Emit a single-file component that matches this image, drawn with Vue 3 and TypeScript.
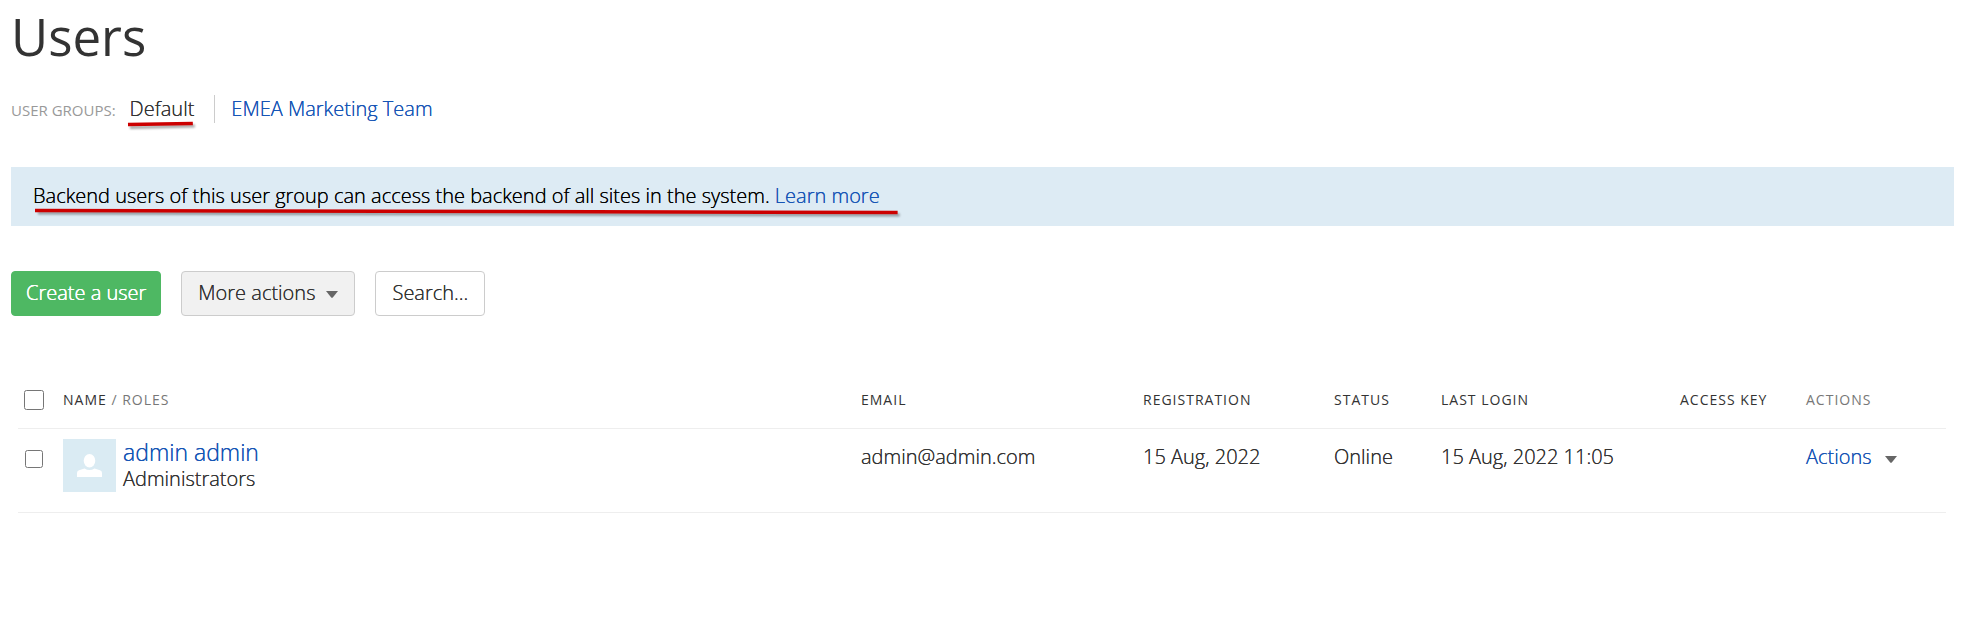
<script setup lang="ts">
import { ref, computed } from 'vue'

interface Group { id: string; name: string }
interface User {
  id: number
  name: string
  roles: string
  email: string
  registered: string
  status: string
  lastLogin: string
  accessKey: string
}

const groups: Group[] = [
  { id: 'default', name: 'Default' },
  { id: 'emea', name: 'EMEA Marketing Team' },
]
const currentGroup = ref('default')

const users: User[] = [
  {
    id: 1,
    name: 'admin admin',
    roles: 'Administrators',
    email: 'admin@admin.com',
    registered: '15 Aug, 2022',
    status: 'Online',
    lastLogin: '15 Aug, 2022 11:05',
    accessKey: '',
  },
]
const selected = ref<number[]>([])
const allSelected = computed({
  get: () => selected.value.length === users.length,
  set: (on: boolean) => { selected.value = on ? users.map((u) => u.id) : [] },
})
</script>

<template>
  <main class="page">
    <h1 class="title">Users</h1>

    <nav class="groups" aria-label="User groups">
      <span class="groups-label">USER GROUPS:</span>
      <ul class="groups-list">
        <li v-for="g in groups" :key="g.id" class="group">
          <span v-if="g.id === currentGroup" class="group-current">
            {{ g.name }}
            <svg class="mark mark-group" viewBox="0 0 74 10" preserveAspectRatio="none" aria-hidden="true">
              <path class="mark-shade" d="M3 6.5 L69 5" />
              <path class="mark-line" d="M1 3.5 L67 2.5" />
            </svg>
          </span>
          <a v-else href="#" @click.prevent="currentGroup = g.id">{{ g.name }}</a>
        </li>
      </ul>
    </nav>

    <p class="info">
      <span class="info-text">
        Backend users of this user group can access the backend of all sites in the system.
        <a href="#">Learn more</a>
        <svg class="mark mark-info" viewBox="0 0 870 10" preserveAspectRatio="none" aria-hidden="true">
          <path class="mark-shade" d="M4 5 L867 7" />
          <path class="mark-line" d="M1 2.5 L865 4.5" />
        </svg>
      </span>
    </p>

    <div class="toolbar">
      <button type="button" class="btn btn-create">Create a user</button>
      <button type="button" class="btn btn-more">
        More actions
        <svg class="caret" viewBox="0 0 12 7" aria-hidden="true"><path d="M0 0H12L6.8 6.4Q6 7 5.2 6.4Z" /></svg>
      </button>
      <button type="button" class="btn btn-search">Search...</button>
    </div>

    <div class="grid-wrap">
      <table class="grid">
        <colgroup>
          <col class="c-check"><col class="c-name"><col class="c-email"><col class="c-reg">
          <col class="c-status"><col class="c-login"><col class="c-key"><col class="c-actions">
        </colgroup>
        <thead>
          <tr>
            <th scope="col"><input v-model="allSelected" type="checkbox" class="check check-all" aria-label="Select all users"></th>
            <th scope="col">NAME <span class="muted">/ ROLES</span></th>
            <th scope="col">EMAIL</th>
            <th scope="col">REGISTRATION</th>
            <th scope="col">STATUS</th>
            <th scope="col">LAST LOGIN</th>
            <th scope="col">ACCESS KEY</th>
            <th scope="col" class="muted">ACTIONS</th>
          </tr>
        </thead>
        <tbody>
          <tr v-for="u in users" :key="u.id">
            <td><input v-model="selected" type="checkbox" class="check" :value="u.id" :aria-label="`Select ${u.name}`"></td>
            <td class="user-cell">
              <div class="user">
                <svg class="avatar" viewBox="0 0 53 53" aria-hidden="true">
                  <rect width="53" height="53" fill="#daebf3" />
                  <ellipse cx="26.5" cy="21.7" rx="5.8" ry="6.8" fill="#fff" />
                  <path d="M14 38V34Q14 32 16 31.3L21.5 29.6Q26.5 32.6 31.5 29.6L37 31.3Q39 32 39 34V38Z" fill="#fff" />
                </svg>
                <div>
                  <a href="#" class="user-name">{{ u.name }}</a>
                  <div class="user-roles">{{ u.roles }}</div>
                </div>
              </div>
            </td>
            <td>{{ u.email }}</td>
            <td>{{ u.registered }}</td>
            <td>{{ u.status }}</td>
            <td>{{ u.lastLogin }}</td>
            <td>{{ u.accessKey }}</td>
            <td>
              <button type="button" class="row-actions">
                Actions
                <svg class="caret" viewBox="0 0 12 7" aria-hidden="true"><path d="M0 0H12L6.8 6.4Q6 7 5.2 6.4Z" /></svg>
              </button>
            </td>
          </tr>
        </tbody>
      </table>
    </div>
  </main>
</template>

<style>
body {
  background: #fff;
}
</style>

<style scoped>
.page {
  padding: 0 16px 0 11px;
  font-family: "Open Sans", "Noto Sans", sans-serif;
  font-size: 20px;
  font-weight: 300;
  line-height: 28px;
  color: #333;
  text-shadow: 0 0 0 currentColor;
}
a {
  color: #1655b5;
  text-decoration: none;
  text-shadow: 0 0 0 currentColor;
}
.title {
  margin: 0;
  font-size: 51px;
  line-height: 72px;
  font-weight: 400;
  text-shadow: none;
}
.groups {
  display: flex;
  align-items: baseline;
  gap: 14px;
  margin-top: 23px;
}
.groups-label {
  font-size: 15px;
  font-weight: 400;
  color: #999;
  text-shadow: none;
}
.groups-list {
  display: flex;
  margin: 0;
  padding: 0;
  list-style: none;
}
.group + .group {
  margin-left: 20px;
  padding-left: 16px;
  border-left: 1px solid #ccc;
}
.group-current,
.info-text {
  position: relative;
}
.mark {
  position: absolute;
  overflow: visible;
  pointer-events: none;
}
.mark-group {
  left: -3px;
  top: 26px;
  width: calc(100% + 8px);
  height: 10px;
}
.mark-info {
  left: 1px;
  top: 26px;
  width: calc(100% + 22px);
  height: 10px;
}
.mark-line {
  fill: none;
  stroke: #c00;
  stroke-width: 3.5;
}
.mark-shade {
  fill: none;
  stroke: #000;
  stroke-opacity: 0.35;
  stroke-width: 3;
  filter: blur(1px);
}
.info {
  display: flex;
  margin: 43px 0 0;
  padding: 15px 22px 16px;
  background: #ddebf4;
  color: #000;
  text-shadow: 0 0 0 currentColor;
}
.toolbar {
  display: flex;
  gap: 20px;
  margin-top: 45px;
}
.btn {
  display: flex;
  align-items: center;
  height: 45px;
  padding: 0 16px 2px;
  border: 1px solid #ccc;
  border-radius: 4px;
  background: #fff;
  color: #333;
  font: inherit;
  text-shadow: 0 0 0 currentColor;
}
.btn-create {
  padding: 0 14px 2px;
  border-color: #4eb863;
  background: #4eb863;
  color: #fff;
  text-shadow: 0 0 0 currentColor, 0 0 0 currentColor;
}
.btn-more {
  gap: 11px;
  background: #f1f1f1;
}
.caret {
  width: 12px;
  height: 7px;
  margin-top: 4px;
  fill: #666;
}
.grid-wrap {
  margin: 58px 8px 0 7px;
}
.grid {
  width: 100%;
  table-layout: fixed;
  border-collapse: collapse;
}
.c-check { width: 45px; }
.c-email { width: 282px; }
.c-reg { width: 191px; }
.c-status { width: 107px; }
.c-login { width: 239px; }
.c-key { width: 126px; }
.c-actions { width: 140px; }
th,
td {
  padding: 0;
  text-align: left;
  vertical-align: top;
  border-bottom: 1px solid #eee;
}
th {
  padding: 12px 0 14px;
  font-size: 14px;
  font-weight: 400;
  letter-spacing: 1px;
  text-shadow: none;
}
td {
  padding: 14px 0 0;
}
.muted {
  color: #777;
}
.user-cell {
  padding: 10px 0 20px;
}
.check {
  display: block;
  width: 18px;
  height: 18px;
  margin: 7px 0 0 7px;
}
.check-all {
  width: 20px;
  height: 20px;
  margin: 4px 0 0 6px;
}
.user {
  display: flex;
  gap: 7px;
}
.avatar {
  width: 53px;
  height: 53px;
}
.user-name {
  display: block;
  font-size: 23px;
  line-height: 26px;
}
.user-roles {
  line-height: 27px;
}
.row-actions {
  display: flex;
  align-items: center;
  gap: 13px;
  padding: 0;
  border: 0;
  background: none;
  color: #1655b5;
  font: inherit;
  text-shadow: 0 0 0 currentColor;
}
</style>
